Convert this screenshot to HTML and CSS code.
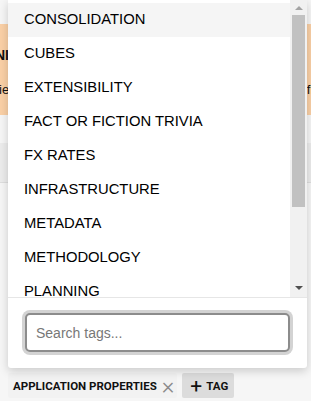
FILE: index.html
```html
<!DOCTYPE html>
<html lang="en">
<head>
    <meta charset="UTF-8">
    <title>Tag picker</title>
    <link rel="stylesheet" href="styles.css">
</head>
<body>
<div class="page">
    <div class="topbar"></div>
    <div class="notice">
        <h2>NIGHTLY BUILD NOTICE</h2>
        <p>ies are being updated tonight, please save your work first</p>
    </div>
    <div class="spacer"></div>
    <div class="toolbar"></div>
    <div class="content"></div>
    <ul class="tags">
        <li class="tag">APPLICATION PROPERTIES <span class="remove">&times;</span></li>
        <li class="tag add"><span class="plus">+</span>TAG</li>
    </ul>
</div>

<!-- tag dropdown, opened over the page -->
<div class="dropdown">
    <div class="list-wrap">
        <ul class="options">
            <li class="hover">CONSOLIDATION</li>
            <li>CUBES</li>
            <li>EXTENSIBILITY</li>
            <li>FACT OR FICTION TRIVIA</li>
            <li>FX RATES</li>
            <li>INFRASTRUCTURE</li>
            <li>METADATA</li>
            <li>METHODOLOGY</li>
            <li>PLANNING</li>
            <li>REPORTING</li>
        </ul>
        <div class="scrollbar">
            <div class="arrow up"></div>
            <div class="thumb"></div>
            <div class="track"></div>
            <div class="arrow down"></div>
        </div>
    </div>
    <div class="search">
        <input type="text" placeholder="Search tags..." autofocus>
    </div>
</div>
</body>
</html>
```
FILE: styles.css
```css
html, body {
    margin: 0;
    padding: 0;
}
body {
    background: #f6f6f6;
    font-family: "Liberation Sans", Arial, sans-serif;
    color: #111;
}
.page {
    width: 311px;
    overflow: hidden;
}
.topbar {
    height: 24px;
}
.notice {
    height: 91px;
    background: #fad0a6;
    overflow: hidden;
    white-space: nowrap;
}
.notice h2 {
    margin: 22px 0 0 -5px;
    font-size: 14px;
    font-weight: bold;
    line-height: 18px;
}
.notice p {
    margin: 18px 0 0 -1px;
    font-size: 13px;
    line-height: 16px;
}
.spacer {
    height: 28px;
}
.toolbar {
    height: 39px;
    background: #ececec;
    border-bottom: 1px solid #dedede;
}
.content {
    height: 190px;
}
.tags {
    list-style: none;
    margin: 0;
    padding: 0 0 0 8px;
    display: flex;
    gap: 5px;
    font-family: Roboto, "Liberation Sans", sans-serif;
}
.tag {
    height: 25px;
    padding: 0 3px 0 5px;
    background: #f2f2f2;
    border-radius: 2px;
    display: flex;
    align-items: center;
    font-size: 11.5px;
    font-weight: bold;
    color: #111;
}
.remove {
    margin-left: 5px;
    font-size: 24px;
    font-weight: 300;
    line-height: 20px;
    color: #8a8a8a;
}
.tag.add {
    background: #dcdcdc;
    padding: 0 6px 0 8px;
}
.plus {
    font-size: 21px;
    font-weight: normal;
    line-height: 20px;
    margin-right: 4px;
}

/* dropdown */
.dropdown {
    position: absolute;
    top: 0;
    left: 8px;
    width: 299px;
    background: #fff;
    border-radius: 0 0 3px 3px;
    box-shadow: 0 3px 10px rgba(0, 0, 0, 0.18);
}
.list-wrap {
    height: 297px;
    display: flex;
    border-bottom: 1px solid #e6e6e6;
}
.options {
    flex: 1;
    list-style: none;
    margin: 0;
    padding: 3px 0 0;
    overflow: hidden;
}
.options li {
    height: 34px;
    line-height: 32px;
    padding-left: 16px;
    font-size: 14.8px;
    color: #000;
}
.options li.hover {
    background: #f5f5f5;
}
.scrollbar {
    width: 17px;
    background: #f1f1f1;
    display: flex;
    flex-direction: column;
}
.arrow {
    height: 15px;
    display: flex;
    align-items: center;
    justify-content: center;
}
.arrow::before {
    content: "";
    border-left: 4px solid transparent;
    border-right: 4px solid transparent;
}
.arrow.up::before {
    border-bottom: 4px solid #a3a3a3;
}
.arrow.down {
    height: 18px;
}
.arrow.down::before {
    border-top: 4px solid #505050;
}
.thumb {
    height: 192px;
    margin: 0 2px;
    background: #c1c1c1;
}
.track {
    flex: 1;
}
.search {
    padding: 15px 17px 16px;
}
.search input {
    display: block;
    box-sizing: border-box;
    width: 100%;
    height: 39px;
    padding: 0 9px;
    border: 2px solid #8c8c8c;
    border-radius: 5px;
    box-shadow: 0 0 0 3px #d3d3d3;
    outline: none;
    font-family: "Liberation Sans", Arial, sans-serif;
    font-size: 14px;
    color: #111;
    caret-color: #111;
}
.search input::placeholder {
    color: #777;
}
```
